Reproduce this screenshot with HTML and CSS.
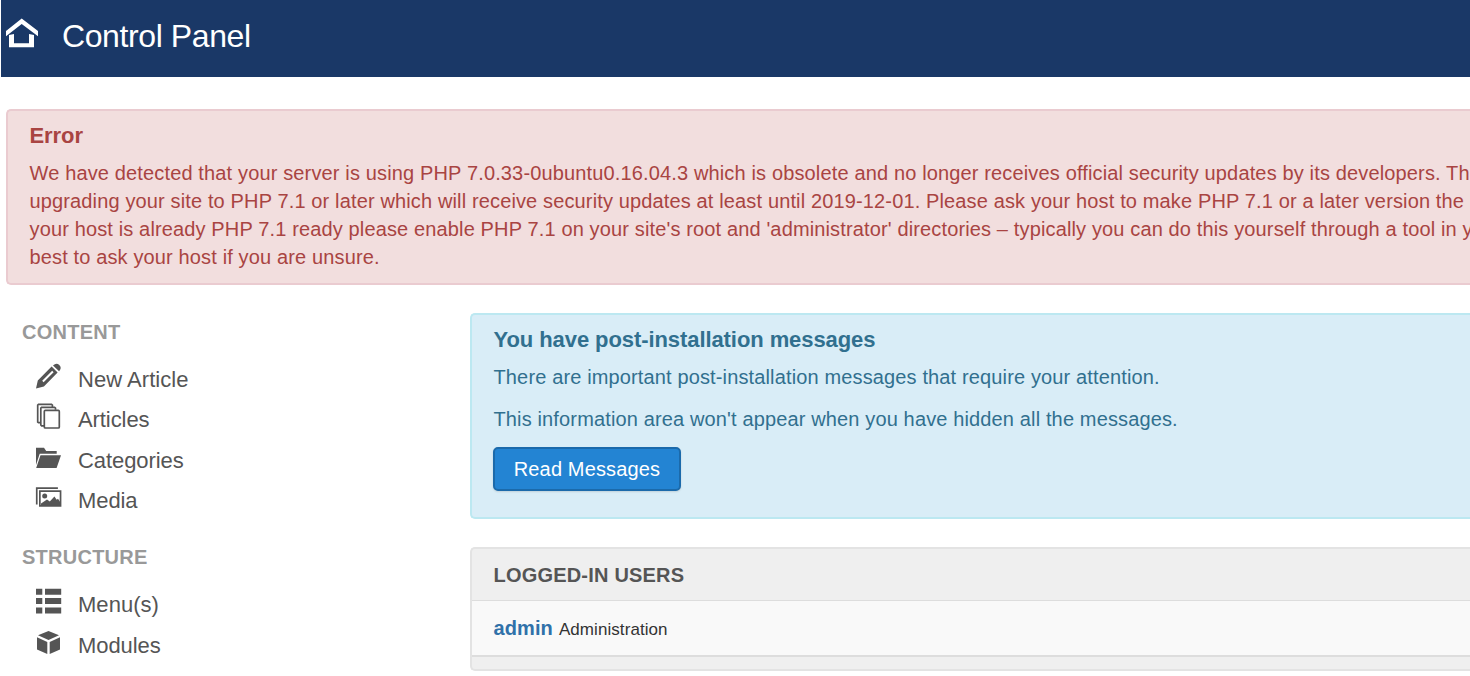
FILE: index.html
```
<!DOCTYPE html>
<html lang="en">
<head>
<meta charset="utf-8">
<title>Control Panel</title>
<link rel="stylesheet" href="styles.css">
</head>
<body>
<header class="header">
  <svg class="home" viewBox="0 0 34 32" width="34" height="32"><path d="M1 14 16.7 1.5 33 14v5.3L16.7 7 1 19.3zM4 18l5-1v9.2h15V17l5 1v12.2H4z" fill="#fff"/></svg>
  <h1 class="page-title">Control Panel</h1>
</header>
<main>
  <section class="alert alert-error">
    <h4 class="alert-heading">Error</h4>
    <p class="line first">We have detected that your server is using PHP 7.0.33-0ubuntu0.16.04.3 which is obsolete and no longer receives official security updates by its developers. Th</p>
    <p class="line">upgrading your site to PHP 7.1 or later which will receive security updates at least until 2019-12-01. Please ask your host to make PHP 7.1 or a later version the</p>
    <p class="line">your host is already PHP 7.1 ready please enable PHP 7.1 on your site's root and 'administrator' directories – typically you can do this yourself through a tool in y</p>
    <p class="line">best to ask your host if you are unsure.</p>
  </section>
  <div class="columns">
    <nav class="sidebar">
      <h2 class="nav-header">CONTENT</h2>
      <ul class="nav-list">
        <li><svg class="icon" viewBox="0 0 28 28"><path fill-rule="evenodd" d="M1 26.4 2.8 18.4 16.6 4.6l6 5.8L8.9 24.4zM7.2 18.8l1.4 1.4L18.6 10.2l-1.4-1.4z"/><path d="M18 3.6Q21.3.2 24.3 3q2.9 2.8-.2 6.3z"/></svg><span>New Article</span></li>
        <li><svg class="icon outline" viewBox="0 0 28 28"><path d="M6 20.7H3.5L2.7 20V3.2l.8-.8h13l.9.8v1.4M9 23.8H6.6l-.8-.8V6.2l.8-.8h13l.9.8v1.6"/><rect x="9.3" y="8.4" width="15" height="17.6" rx="1"/></svg><span>Articles</span></li>
        <li><svg class="icon" viewBox="0 0 28 28"><path d="M1 22V4.7h8L11.2 8h10.5v2.8H4.7zM5.5 12.2H26L21.6 25H1.2z"/></svg><span>Categories</span></li>
        <li><svg class="icon" viewBox="0 0 28 28"><path fill-rule="evenodd" d="M.9 21.5V4.2h22v1.7H2.6v15.6zM4 7.2h22.4v16.6H4zM5.7 8.9v13.2h19V8.9z"/><circle cx="9.7" cy="13" r="2.5"/><path d="M6 22.5v-2l6-4 2.8 2 4.6-5 2.3 3.2 1.3-1 2 3v3.8z"/></svg><span>Media</span></li>
      </ul>
      <h2 class="nav-header">STRUCTURE</h2>
      <ul class="nav-list structure">
        <li><svg class="icon" viewBox="0 0 28 28"><path d="M1 1.7h6.3v6H1zM10 1.7h16.2v6H10zM1 11h6.3v6H1zM10 11h16.2v6H10zM1 20.4h6.3v6.2H1zM10 20.4h16.2v6.2H10z"/></svg><span>Menu(s)</span></li>
        <li><svg class="icon" viewBox="0 0 28 28"><path d="M13.5 3 24 7.3 13.5 12 3 7.3zM2 9.3l10.3 4.8V26L2 21.4zM25 9.3l-10.3 4.8V26L25 21.4z"/></svg><span>Modules</span></li>
      </ul>
    </nav>
    <div class="content">
      <section class="alert alert-info">
        <h4 class="alert-heading">You have post-installation messages</h4>
        <p class="message">There are important post-installation messages that require your attention.</p>
        <p class="message">This information area won't appear when you have hidden all the messages.</p>
        <button class="btn">Read Messages</button>
      </section>
      <section class="well">
        <h2 class="well-title">LOGGED-IN USERS</h2>
        <div class="well-row"><strong>admin</strong><small>Administration</small></div>
      </section>
    </div>
  </div>
</main>
</body>
</html>
```
FILE: styles.css
```
* { box-sizing: border-box; }
html { overflow: hidden; }
body { margin: 0; background: #fff; height: 676px; overflow: hidden; font-family: "Liberation Sans", Arial, sans-serif; font-size: 20px; line-height: 28px; color: #333; }
h1, h2, h4, p, ul { margin: 0; padding: 0; }
ul { list-style: none; }
.header { display: flex; height: 77px; margin-left: 1px; padding: 17px 0 0 4px; background: #1a3867; }
.home { flex: none; }
.page-title { margin-left: 23px; color: #fff; font-size: 32px; font-weight: 400; line-height: 38px; letter-spacing: -.4px; white-space: nowrap; }
.alert { border: 2px solid; border-right: 0; border-radius: 5px 0 0 5px; padding: 11px 0 12px 21.5px; overflow: hidden; white-space: nowrap; }
.alert-error { margin: 32px 0 0 6px; height: 176px; background: #f2dede; border-color: #eacbd0; color: #a94442; }
.alert-heading { margin-bottom: 9px; font-size: 22px; line-height: 28px; letter-spacing: -.08px; }
.line, .message { letter-spacing: .138px; }
.first { letter-spacing: .145px; }
.columns { display: flex; margin-top: 28px; }
.sidebar { width: 470px; flex: none; padding: 5px 0 0 22px; }
.nav-header { height: 28px; margin-bottom: 13px; font-size: 20px; line-height: 28px; letter-spacing: .25px; color: #999; }
.nav-list { margin-bottom: 22px; padding-left: 13px; }
.nav-list li { display: flex; height: 40px; font-size: 22px; line-height: 42px; letter-spacing: -.08px; color: #555; }
.nav-list li:first-child { letter-spacing: .04px; }
.nav-list li:nth-child(even), .structure li:first-child { height: 41px; }
.icon { width: 28px; height: 28px; margin: 3px 15px 0 0; flex: none; fill: #555; }
.outline { fill: none; stroke: #555; stroke-width: 1.7; }
.content { flex: 1; min-width: 0; }
.alert-info { height: 206px; background: #d9edf7; border-color: #bce8f1; color: #31708f; }
.message { margin-bottom: 14px; }
.btn { display: block; width: 188px; height: 44px; margin-left: -.5px; padding: 0; border: 2px solid #1b6aab; border-radius: 5px; background: #2384d3; box-shadow: 0 1px 2px rgba(0,0,0,.12); color: #fff; font: 20px "Liberation Sans", Arial, sans-serif; letter-spacing: .15px; }
.well { height: 124px; margin-top: 28px; border: 2px solid #e3e3e3; border-right: 0; border-radius: 5px 0 0 5px; background: #efefef; overflow: hidden; }
.well-title { height: 52px; padding-left: 21.5px; border-bottom: 1px solid #ddd; font-size: 20px; line-height: 52px; letter-spacing: .2px; color: #555; }
.well-row { display: flex; align-items: baseline; height: 56px; padding-left: 21.5px; border-bottom: 2px solid #ddd; background: #f9f9f9; line-height: 54px; }
.well-row strong { color: #3071a9; letter-spacing: .1px; }
.well-row small { margin-left: 6px; font-size: 17px; letter-spacing: .07px; }
```
